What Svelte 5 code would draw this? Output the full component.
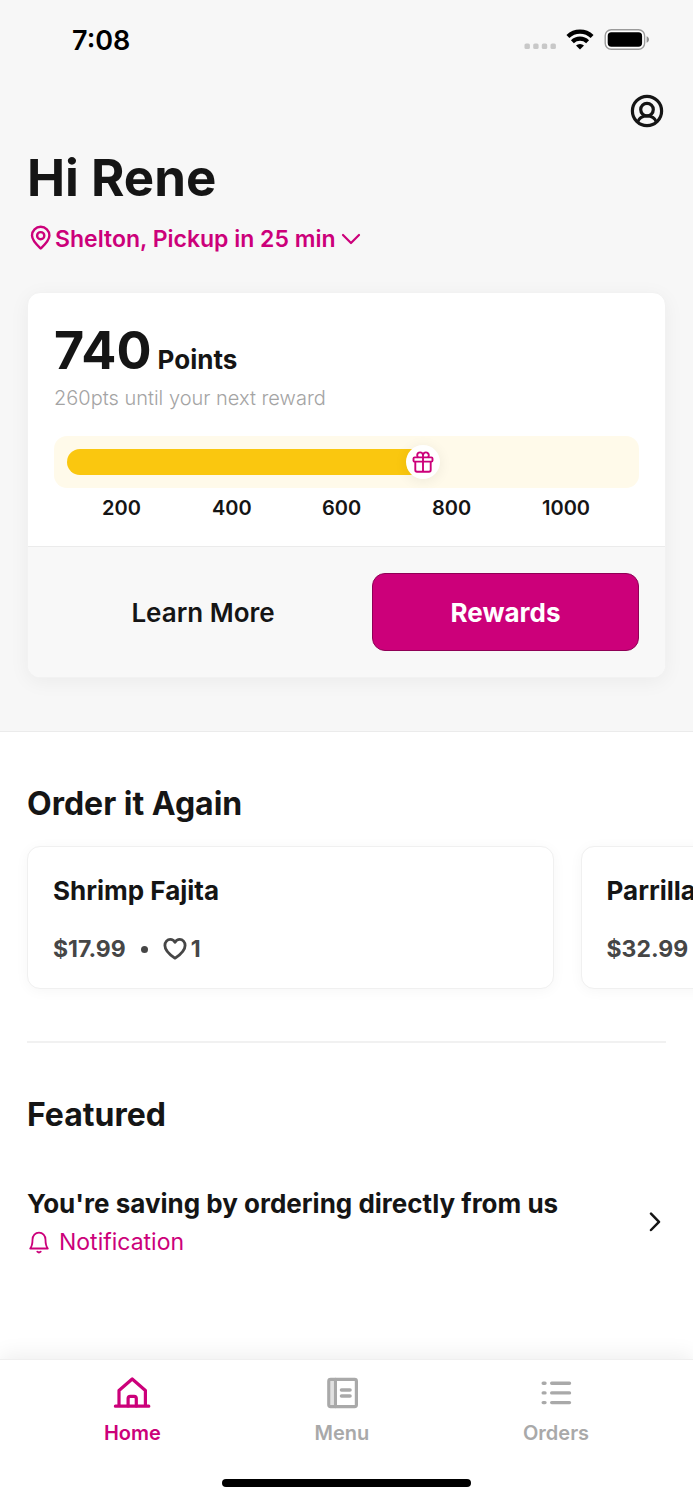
<script>
  const milestones = [200, 400, 600, 800, 1000];
  const progress = 63.7;
  const orders = [
    { name: 'Shrimp Fajita', price: '$17.99' , likes: 1 },
    { name: 'Parrillada', price: '$32.99', likes: null }
  ];
  let active = $state('Home');
</script>

{#snippet heart()}
  <svg width="24" height="24" viewBox="0 0 24 24" fill="none" stroke="currentColor" stroke-width="2.8" stroke-linejoin="round" aria-hidden="true">
    <path d="M12 21.2C8.600 18.800 1.900 14.400 1.900 8.400C1.900 5.100 4.300 2.400 7.300 2.400c2 0 3.700 1.100 4.700 2.900C13 3.500 14.700 2.400 16.700 2.400c3 0 5.400 2.700 5.400 6C22.100 14.400 15.400 18.800 12 21.200z" />
  </svg>
{/snippet}

<div class="page">
  <header class="hero">
    <div class="status">
      <span class="time">7:08</span>
      <div class="signals">
        <svg width="32" height="22" viewBox="0 0 32 22" fill="#c8c8c8" aria-hidden="true">
          <rect x="0.500" y="14.500" width="5.400" height="5.600" rx="1.600" />
          <rect x="9.200" y="14.500" width="5.400" height="5.600" rx="1.600" />
          <rect x="17.800" y="14.500" width="5.400" height="5.600" rx="1.600" />
          <rect x="26.500" y="14.500" width="5.400" height="5.600" rx="1.600" />
        </svg>
        <svg width="28" height="22" viewBox="0 0 28 22" aria-hidden="true">
          <g fill="none" stroke="#000" stroke-width="4.200">
            <path d="M1.900 7.600A17.400 17.400 0 0 1 26.100 7.600" />
            <path d="M6.400 12.700A11 11 0 0 1 21.600 12.700" />
          </g>
          <path d="M14 20.600L10 16.500A5.800 5.800 0 0 1 18 16.500Z" fill="#000" />
        </svg>
        <svg width="46" height="22" viewBox="0 0 46 22" aria-hidden="true">
          <rect x="1.200" y="0.800" width="39.400" height="19.400" rx="6" fill="#fff" stroke="#9b9b9b" stroke-width="1.400" />
          <rect x="3.700" y="3.300" width="34.400" height="14.400" rx="3.600" fill="#000" />
          <path d="M42.600 7.300C44 7.800 45 9 45 10.500S44 13.200 42.600 13.700z" fill="#8e8e8e" />
        </svg>
      </div>
    </div>

    <div class="toolbar">
      <button class="plain" aria-label="Profile">
        <svg width="34" height="34" viewBox="0 0 34 34" fill="none" stroke="#151515" stroke-width="3.200" aria-hidden="true">
          <circle cx="17" cy="17" r="14.600" />
          <circle cx="17" cy="15.600" r="6.300" />
          <path d="M7.600 28C9 24.200 12.600 22 17 22s8 2.200 9.400 6" />
        </svg>
      </button>
    </div>

    <h1>Hi Rene</h1>
    <button class="plain location">
      <svg width="28" height="28" viewBox="0 0 28 28" fill="none" stroke="currentColor" stroke-width="2.400" stroke-linejoin="round" aria-hidden="true">
        <path d="M13.700 23.500C10 20 5 15.500 5 10.500a8.700 8.700 0 0 1 17.400 0c0 5-5 9.500-8.700 13z" />
        <circle cx="13.700" cy="10.700" r="3.600" />
      </svg>
      <span>Shelton, Pickup in 25 min</span>
      <svg class="caret" width="20" height="12" viewBox="0 0 20 12" fill="none" stroke="currentColor" stroke-width="2.200" stroke-linecap="round" stroke-linejoin="round" aria-hidden="true">
        <path d="M2 2l8 8 8-8" />
      </svg>
    </button>

    <section class="points">
      <div class="points-body">
        <p class="score"><strong>740</strong> Points</p>
        <p class="hint">260pts until your next reward</p>
        <div class="track" role="progressbar" aria-label="Reward points" aria-valuemin="0" aria-valuemax="1000" aria-valuenow="740">
          <div class="fill" style="width: {progress}%">
            <span class="marker">
              <svg width="22" height="22" viewBox="0 0 22 22" fill="none" stroke="#cc007a" stroke-width="1.900" stroke-linejoin="round" aria-hidden="true">
                <rect x="1.500" y="6.400" width="19" height="4.200" rx="1.200" />
                <path d="M3.300 10.600v8.400a1.700 1.700 0 0 0 1.700 1.700h12a1.700 1.700 0 0 0 1.700-1.700v-8.400M11 6.400v14.300" />
                <path d="M11 6.400V4.300a2.900 2.900 0 1 0-5.800 0c0 .9.300 1.600.9 2.100M11 6.400V4.300a2.900 2.900 0 1 1 5.800 0c0 .9-.3 1.600-.9 2.100" />
              </svg>
            </span>
          </div>
        </div>
        <div class="scale">
          {#each milestones as m}<span>{m}</span>{/each}
        </div>
      </div>
      <div class="points-actions">
        <button class="action">Learn More</button>
        <button class="action primary">Rewards</button>
      </div>
    </section>
  </header>

  <main>
    <section class="again">
      <h2>Order it Again</h2>
      <div class="carousel">
        {#each orders as o}
          <article class="order">
            <h3>{o.name}</h3>
            <p class="meta">
              <span>{o.price}</span>
              {#if o.likes}
                <span class="dot"></span>
                <span class="likes">{@render heart()}{o.likes}</span>
              {/if}
            </p>
          </article>
        {/each}
      </div>
    </section>

    <section class="featured">
      <h2>Featured</h2>
      <a class="promo" href="#notification">
        <span class="promo-text">
          <span class="promo-title">You're saving by ordering directly from us</span>
          <span class="promo-tag">
            <svg width="24" height="24" viewBox="0 0 24 24" fill="none" stroke="currentColor" stroke-width="1.800" stroke-linecap="round" stroke-linejoin="round" aria-hidden="true">
              <path d="M3.200 17.500C5 15.200 5.500 12.800 5.500 8.800C5.500 4.600 8.300 1.700 12 1.700s6.500 2.900 6.500 7.100c0 4 .5 6.400 2.300 8.700z" />
              <path d="M10.300 20.700c1 .9 2.400.9 3.400 0" />
            </svg>
            Notification
          </span>
        </span>
        <svg width="14" height="22" viewBox="0 0 14 22" fill="none" stroke="#151515" stroke-width="2.500" stroke-linecap="round" stroke-linejoin="round" aria-hidden="true">
          <path d="M3 1.600l8 8.200-8 8.200" />
        </svg>
      </a>
    </section>
  </main>

  <footer class="tabbar">
    <nav>
      <button class="tab" class:active={active === 'Home'} onclick={() => (active = 'Home')}>
        <svg width="44" height="44" viewBox="0 0 44 44" fill="none" stroke="currentColor" stroke-width="3.200" stroke-linecap="round" stroke-linejoin="round" aria-hidden="true">
          <path d="M5.400 35.200h33.400M9 35V19.500L22.200 8l13.200 11.500V35" />
          <path d="M18.100 35v-7.500a2.200 2.200 0 0 1 2.200-2.200h3.800a2.200 2.200 0 0 1 2.200 2.200V35" />
        </svg>
        Home
      </button>
      <button class="tab" class:active={active === 'Menu'} onclick={() => (active = 'Menu')}>
        <svg width="44" height="44" viewBox="0 0 44 44" fill="none" stroke="currentColor" stroke-width="3.200" stroke-linecap="round" aria-hidden="true">
          <rect x="8.800" y="8.400" width="27.600" height="27.200" rx="1.800" />
          <path d="M15.400 8.400v27.200" />
          <path d="M21.500 19h8.500M21.500 25h8.500" stroke-width="3.600" />
          <path d="M12 10v24" stroke-width="3.200" opacity="0.350" />
        </svg>
        Menu
      </button>
      <button class="tab" class:active={active === 'Orders'} onclick={() => (active = 'Orders')}>
        <svg width="44" height="44" viewBox="0 0 44 44" fill="none" stroke="currentColor" stroke-width="3.400" stroke-linecap="round" aria-hidden="true">
          <path d="M9.200 12.200h1.800M9.200 21.900h1.800M9.200 31.600h1.800M17.700 12.200h17.800M17.700 21.900h17.800M17.700 31.600h17.800" />
        </svg>
        Orders
      </button>
    </nav>
    <div class="home-indicator"></div>
  </footer>
</div>

<style>
  :global(body) {
    background: #fff;
  }

  .page {
    display: flex;
    flex-direction: column;
    min-height: 100vh;
    overflow: hidden;
    font-family: Inter, 'Liberation Sans', sans-serif;
    color: #151515;
  }

  h1,
  h2,
  h3,
  p {
    margin: 0;
  }

  button {
    font: inherit;
    color: inherit;
    cursor: pointer;
  }

  svg {
    display: block;
    flex: none;
  }

  .plain {
    padding: 0;
    border: 0;
    background: none;
  }

  .hero {
    padding: 0 27px 53px;
    background: #f7f7f7;
    border-bottom: 1px solid #ebebeb;
  }

  .status {
    display: flex;
    align-items: center;
    justify-content: space-between;
    height: 80px;
    padding: 0 16px 0 45px;
  }

  .time {
    font-size: 27px;
    font-weight: 600;
    color: #000;
  }

  .signals {
    display: flex;
    gap: 10px;
  }

  .toolbar {
    display: flex;
    align-items: center;
    justify-content: flex-end;
    height: 62px;
    padding-right: 2px;
  }

  h1 {
    font-size: 51px;
    line-height: 72px;
    font-weight: 700;
  }

  .location {
    display: flex;
    align-items: center;
    font-size: 23px;
    line-height: 50px;
    font-weight: 600;
    color: #cc007a;
  }

  .caret {
    margin-left: 6px;
  }

  .points {
    margin-top: 28px;
    border: 1px solid #f2f2f2;
    border-radius: 13px;
    overflow: hidden;
    background: #fff;
    box-shadow: 0 4px 20px rgb(0 0 0 / 5%);
  }

  .points-body {
    padding: 26px 26px 18px;
  }

  .score {
    font-size: 26px;
    line-height: 30px;
    font-weight: 700;
  }

  .score strong {
    font-size: 52px;
    line-height: 64px;
    font-weight: 700;
  }

  .hint {
    font-size: 20px;
    line-height: 30px;
    font-weight: 300;
    color: #a4a4a4;
  }

  .track {
    margin-top: 23px;
    padding: 13px;
    border-radius: 13px;
    background: #fffaea;
  }

  .fill {
    position: relative;
    height: 26px;
    border-radius: 13px;
    background: #fac70f;
  }

  .marker {
    position: absolute;
    top: -4px;
    right: -17px;
    display: grid;
    place-items: center;
    width: 34px;
    height: 34px;
    border-radius: 50%;
    background: #fff;
    box-shadow: 0 2px 14px rgb(0 0 0 / 7%);
  }

  .scale {
    display: grid;
    grid-template-columns: repeat(4, 110fr) 97fr;
    padding-left: 48px;
    font-size: 20px;
    line-height: 40px;
    font-weight: 600;
  }

  .points-actions {
    display: grid;
    grid-template-columns: 298fr 267fr;
    gap: 20px;
    padding: 26px;
    border-top: 1px solid #ebebeb;
    background: #f8f8f8;
  }

  .action {
    height: 78px;
    border: 1px solid transparent;
    border-radius: 13px;
    background: none;
    font-size: 26px;
    font-weight: 600;
  }

  .primary {
    border-color: #8f0056;
    background: #cc007a;
    color: #fff;
    font-weight: 700;
  }

  main {
    flex: 1;
  }

  h2 {
    font-size: 32px;
    line-height: 40px;
    font-weight: 700;
  }

  .again,
  .featured {
    margin: 0 27px;
    padding-top: 52px;
  }

  .again {
    border-bottom: 2px solid #f1f1f1;
  }

  .carousel {
    display: flex;
    gap: 27px;
    margin: 0 -27px;
    padding: 22px 27px 52px;
    overflow-x: auto;
    scrollbar-width: none;
  }

  .order {
    flex: 0 0 82.4%;
    box-sizing: border-box;
    padding: 26px 25px 23px;
    border: 1px solid #f0f0f0;
    border-radius: 13px;
    background: #fff;
    box-shadow: 0 2px 14px rgb(0 0 0 / 4%);
  }

  h3 {
    font-size: 26px;
    line-height: 36px;
    font-weight: 700;
  }

  .meta {
    display: flex;
    align-items: center;
    gap: 15px;
    margin-top: 24px;
    font-size: 23px;
    line-height: 32px;
    font-weight: 700;
    color: #464646;
  }

  .dot {
    width: 7px;
    height: 7px;
    border-radius: 50%;
    background: currentColor;
  }

  .likes {
    display: flex;
    align-items: center;
    gap: 4px;
  }

  .promo {
    display: flex;
    align-items: center;
    justify-content: space-between;
    margin-top: 49px;
    padding-right: 4px;
    color: inherit;
    text-decoration: none;
  }

  .promo-text {
    display: flex;
    flex-direction: column;
    line-height: 39px;
  }

  .promo-title {
    font-size: 26px;
    font-weight: 700;
  }

  .promo-tag {
    display: flex;
    align-items: center;
    gap: 8px;
    font-size: 23px;
    color: #cc007a;
  }

  .tabbar {
    border-top: 1px solid #efefef;
    background: #fff;
    box-shadow: 0 -4px 20px rgb(0 0 0 / 7%);
  }

  nav {
    display: flex;
    justify-content: space-between;
    padding: 11px 15% 0;
  }

  .tab {
    display: flex;
    flex-direction: column;
    align-items: center;
    gap: 3px;
    padding: 0;
    border: 0;
    background: none;
    font-size: 20px;
    line-height: 30px;
    font-weight: 600;
    color: #a9a9a9;
  }

  .tab.active {
    color: #cc007a;
  }

  .home-indicator {
    width: 36%;
    height: 8px;
    margin: 31px auto 13px;
    border-radius: 4px;
    background: #000;
  }
</style>
